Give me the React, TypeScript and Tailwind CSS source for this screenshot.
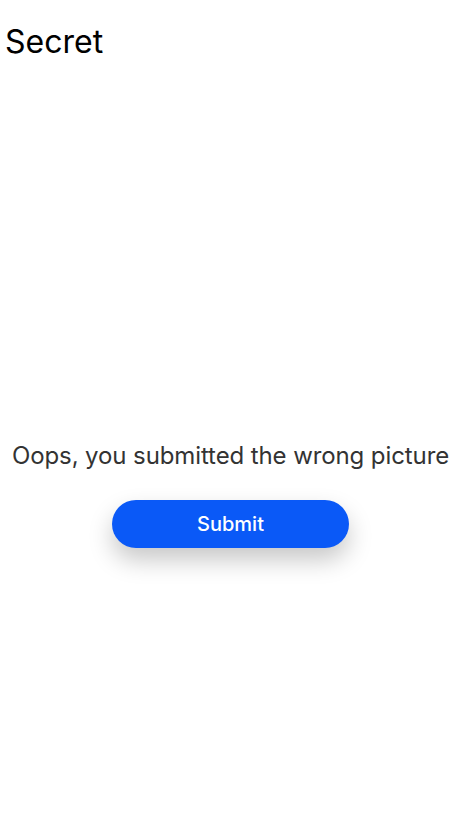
export default function App() {
  return (
    <div className="w-[454px] h-[830px] bg-white flex flex-col" style={{ fontFamily: 'Inter, "Noto Sans", sans-serif' }}>
      <div className="pl-[5px] pt-[18px] text-[32px] leading-[48px] text-black">Secret</div>
      <div className="flex flex-col items-center pl-[7px] mt-[374px]">
        <div className="text-[24px] leading-[32px] text-[#333333] whitespace-nowrap tracking-[-0.1px]">Oops, you submitted the wrong picture</div>
        <button className="mt-[28px] w-[237px] h-[48px] rounded-full bg-[#0a59f7] text-white text-[20px] font-medium shadow-[0_12px_24px_rgba(0,0,0,0.22)]">Submit</button>
      </div>
    </div>
  );
}
